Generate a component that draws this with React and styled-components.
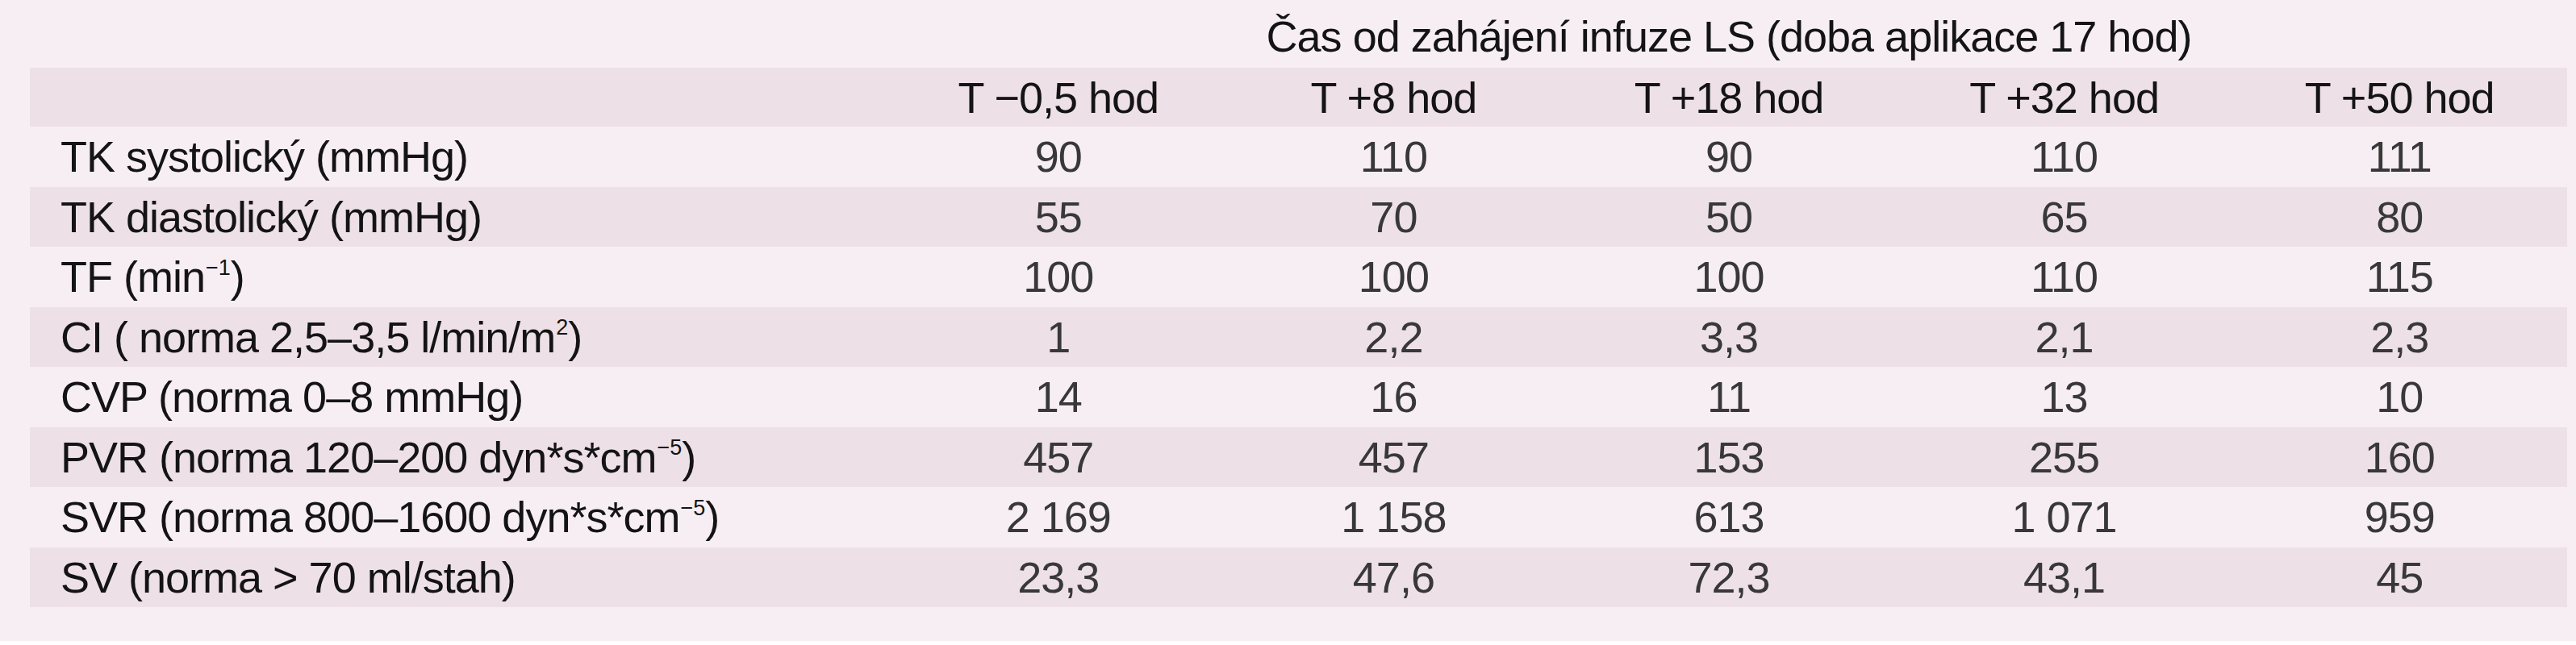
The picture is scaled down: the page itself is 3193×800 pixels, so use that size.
import React from 'react'
import styled, { createGlobalStyle } from "styled-components";

const GlobalStyle = createGlobalStyle`
  html, body {
    margin: 0;
    padding: 0;
    background: #ffffff;
  }
`

const Page = styled.div`
  background: #f7eef3;
  height: 795px;
  padding: 0 11px 0 37px;
  font-family: "Liberation Sans", Arial, sans-serif;
  font-size: 54px;
  letter-spacing: -1px;
  color: #141414;
`

const Table = styled.div`
  display: grid;
  grid-template-columns: 1067px repeat(5, 1fr);
`

const Caption = styled.div`
  grid-column: 2 / span 5;
  height: 84px;
  display: flex;
  align-items: center;
  justify-content: center;
  padding-top: 6px;
  box-sizing: border-box;
`

const Row = styled.div`
  display: contents;

  & > div {
    height: ${(p) => (p.$head ? "73px" : "74.5px")};
    background: ${(p) => (p.$shaded ? "#ede0e6" : "transparent")};
  }
`

const Label = styled.div`
  display: flex;
  align-items: center;
  padding-left: 38px;
  white-space: nowrap;
`

const Head = styled.div`
  display: flex;
  align-items: center;
  justify-content: center;
  white-space: nowrap;
`

const Value = styled.div`
  display: flex;
  align-items: center;
  justify-content: center;
  color: #383838;
  white-space: nowrap;
`

const Sup = styled.sup`
  font-size: 0.5em;
  line-height: 0;
  vertical-align: 0.8em;
  letter-spacing: 0;
  margin-left: 1px;
`

const columns = ["T −0,5 hod", "T +8 hod", "T +18 hod", "T +32 hod", "T +50 hod"]

const rows = [
  { label: <>TK systolický (mmHg)</>, values: ["90", "110", "90", "110", "111"] },
  { label: <>TK diastolický (mmHg)</>, values: ["55", "70", "50", "65", "80"] },
  { label: <>TF (min<Sup>−1</Sup>)</>, values: ["100", "100", "100", "110", "115"] },
  { label: <>CI ( norma 2,5–3,5 l/min/m<Sup>2</Sup>)</>, values: ["1", "2,2", "3,3", "2,1", "2,3"] },
  { label: <>CVP (norma 0–8 mmHg)</>, values: ["14", "16", "11", "13", "10"] },
  { label: <>PVR (norma 120–200 dyn*s*cm<Sup>−5</Sup>)</>, values: ["457", "457", "153", "255", "160"] },
  { label: <>SVR (norma 800–1600 dyn*s*cm<Sup>−5</Sup>)</>, values: ["2 169", "1 158", "613", "1 071", "959"] },
  { label: <>SV (norma &gt; 70 ml/stah)</>, values: ["23,3", "47,6", "72,3", "43,1", "45"] },
]

const App = () => {
  return (
    <>
      <GlobalStyle />
      <Page>
        <Table>
          <Caption>Čas od zahájení infuze LS (doba aplikace 17 hod)</Caption>
          <Row $shaded $head>
            <Label />
            {columns.map((c) => (
              <Head key={c}>{c}</Head>
            ))}
          </Row>
          {rows.map((r, i) => (
            <Row key={i} $shaded={i % 2 === 1}>
              <Label><span>{r.label}</span></Label>
              {r.values.map((v, j) => (
                <Value key={j}>{v}</Value>
              ))}
            </Row>
          ))}
        </Table>
      </Page>
    </>
  )
}

export default App
